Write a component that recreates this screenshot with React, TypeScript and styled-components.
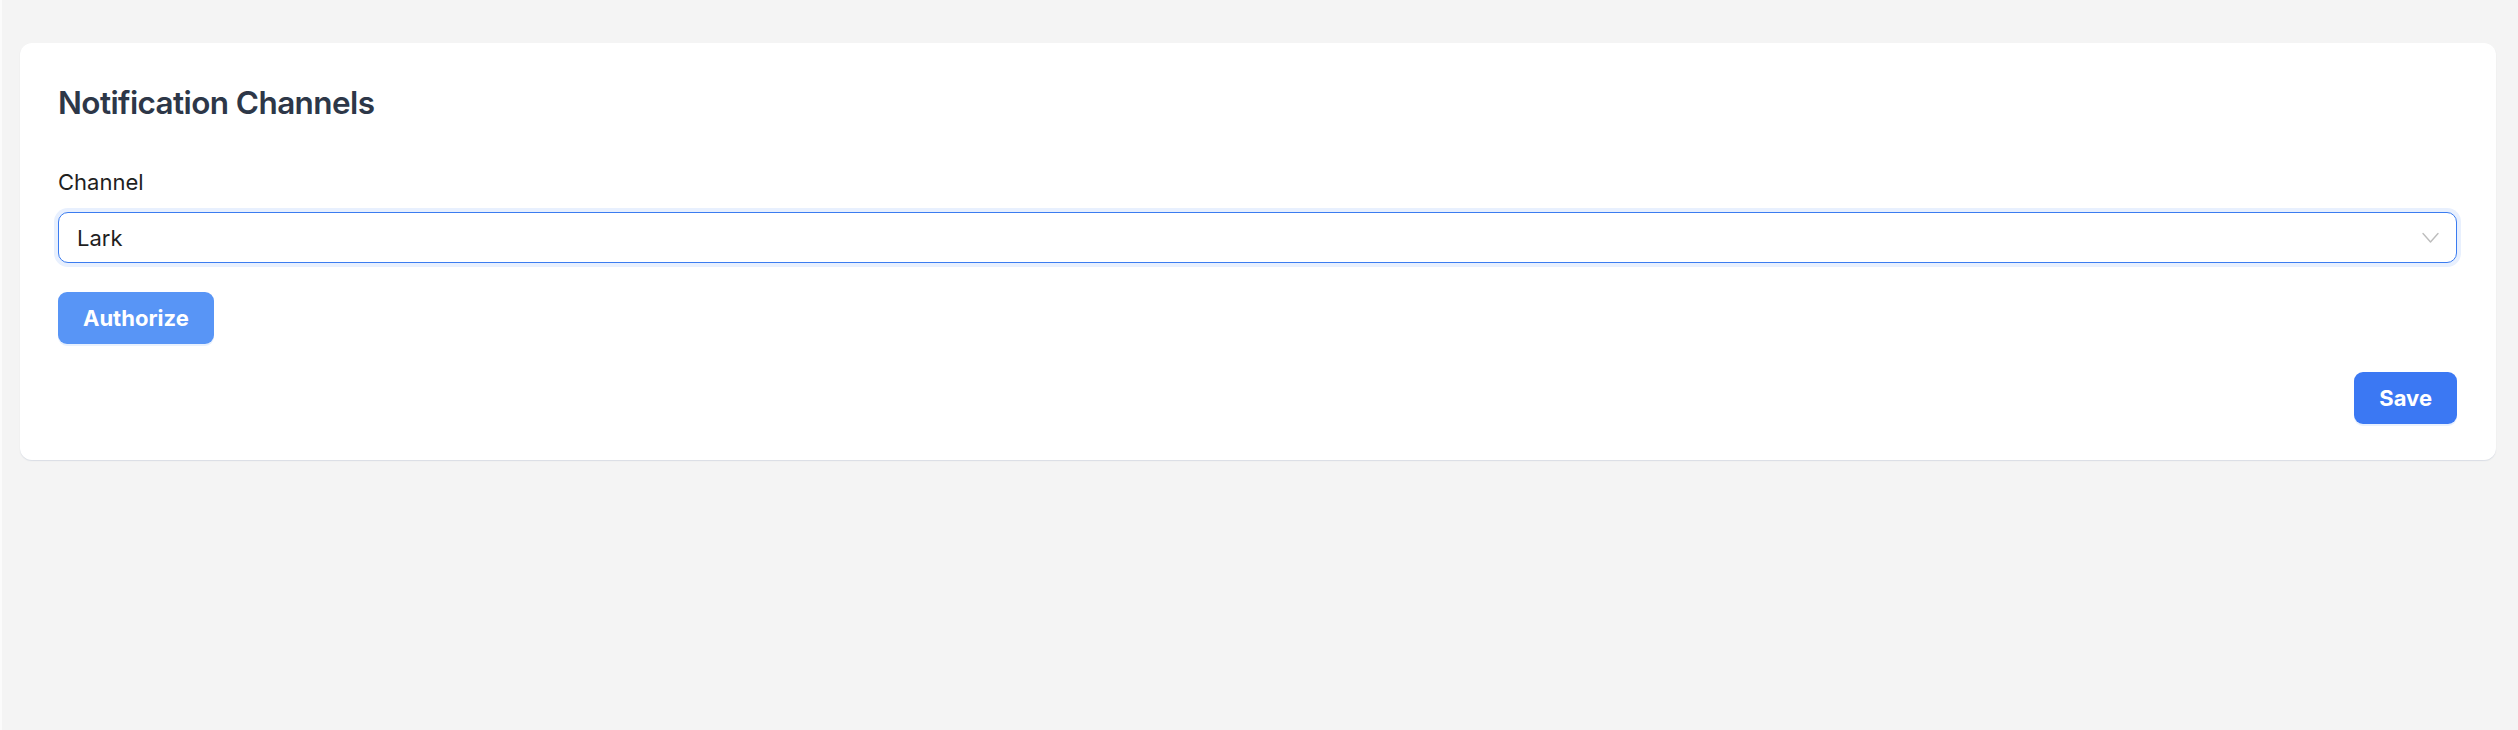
import React from "react";
import styled, { createGlobalStyle } from "styled-components";

const Global = createGlobalStyle`
  html, body { margin: 0; padding: 0; }
  body {
    background: #f4f4f4;
    font-family: Inter, "Noto Sans", "Liberation Sans", sans-serif;
    -webkit-font-smoothing: antialiased;
  }
`;

const Page = styled.main`
  box-sizing: border-box;
  height: 730px;
  border-left: 2px solid #fbfbfb;
  padding: 43px 22px 0 18px;
  background: #f4f4f4;
`;

const Card = styled.section`
  box-sizing: border-box;
  background: #ffffff;
  border-radius: 12px;
  padding: 40px 39px 36px 38px;
  box-shadow: 0 1px 2px rgba(15, 23, 42, 0.06), 0 1px 0 #e6eaf0;
  display: flex;
  flex-direction: column;
`;

const Title = styled.h2`
  margin: 0;
  font-size: 31.5px;
  line-height: 40px;
  font-weight: 600;
  color: #2d3748;
  letter-spacing: -0.6px;
`;

const Field = styled.div`
  margin-top: 43px;
  display: flex;
  flex-direction: column;
  gap: 14px;
`;

const Label = styled.label`
  font-size: 22px;
  line-height: 32px;
  color: #1f1f1f;
`;

const SelectBox = styled.div`
  box-sizing: border-box;
  height: 51px;
  border: 1.5px solid #3b7cf0;
  border-radius: 10px;
  box-shadow: 0 0 0 4px #e8f0fe;
  display: flex;
  align-items: center;
  justify-content: space-between;
  padding: 0 17px 0 18px;
  font-size: 22px;
  color: #1f1f1f;
  background: #fff;
`;

const Actions = styled.div<{ $align: "start" | "end"; $gap: number }>`
  margin-top: ${(p) => p.$gap}px;
  display: flex;
  justify-content: ${(p) => (p.$align === "end" ? "flex-end" : "flex-start")};
`;

const Button = styled.button<{ $tone: "light" | "strong" }>`
  box-sizing: border-box;
  height: 52px;
  border: none;
  border-radius: 9px;
  padding: 0 25px;
  font-family: inherit;
  font-size: 22px;
  font-weight: 700;
  color: #ffffff;
  background: ${(p) => (p.$tone === "light" ? "#5895f6" : "#3b78f3")};
  box-shadow: 0 2px 0 #e8f1fe;
  cursor: pointer;
`;

const Chevron = () => (
  <svg width="17" height="12" viewBox="0 0 17 12" fill="none">
    <path d="M1 1.5 L8.5 10 L16 1.5" stroke="#bdbdbd" strokeWidth="1.4" strokeLinecap="round" strokeLinejoin="round" />
  </svg>
);

export default function App() {
  return (
    <>
      <Global />
      <Page>
        <Card>
          <Title>Notification Channels</Title>
          <Field>
            <Label>Channel</Label>
            <SelectBox>
              <span>Lark</span>
              <Chevron />
            </SelectBox>
          </Field>
          <Actions $align="start" $gap={29}>
            <Button $tone="light">Authorize</Button>
          </Actions>
          <Actions $align="end" $gap={28}>
            <Button $tone="strong">Save</Button>
          </Actions>
        </Card>
      </Page>
    </>
  );
}
